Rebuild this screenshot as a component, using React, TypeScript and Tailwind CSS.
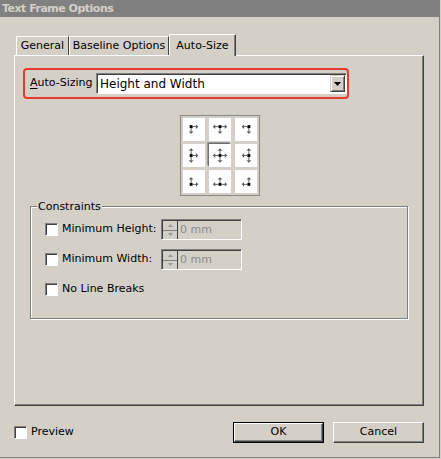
import type { ReactNode } from 'react';

const ui = "font-['DejaVu_Sans',sans-serif]";

/* 锚点图标：黑色方块 + 灰色箭头 */
type Dir = 'u' | 'd' | 'l' | 'r';
const ANGLE: Record<Dir, number> = { r: 0, d: 90, l: 180, u: 270 };

function AnchorGlyph({ dirs }: { dirs: Dir[] }) {
  const dx = (dirs.includes('r') ? 1 : 0) - (dirs.includes('l') ? 1 : 0);
  const dy = (dirs.includes('d') ? 1 : 0) - (dirs.includes('u') ? 1 : 0);
  const cx = 11 - 3 * dx;
  const cy = 11 - 3 * dy;
  const px = cx + 0.5;
  const py = cy + 0.5;
  return (
    <svg width="23" height="23" viewBox="0 0 23 23">
      {dirs.map((d) => (
        <g key={d} transform={`rotate(${ANGLE[d]} ${px} ${py})`} fill="#5c5c5c" stroke="#5c5c5c">
          <line x1={px + 1.5} y1={py} x2={px + 5.5} y2={py} strokeWidth="1" />
          <polygon points={`${px + 7.5},${py} ${px + 5},${py - 2.5} ${px + 5},${py + 2.5}`} stroke="none" />
        </g>
      ))}
      <rect x={cx - 1} y={cy - 1} width="3" height="3" fill="#000" />
    </svg>
  );
}

const CELLS: Dir[][] = [
  ['r', 'd'], ['l', 'r', 'd'], ['l', 'd'],
  ['u', 'd', 'r'], ['u', 'd', 'l', 'r'], ['u', 'd', 'l'],
  ['u', 'r'], ['u', 'l', 'r'], ['u', 'l'],
];

function Checkbox() {
  return (
    <span className="w-[13px] h-[13px] bg-white border border-t-[#808080] border-l-[#808080] border-r-white border-b-white shadow-[inset_1px_1px_0_#404040] shrink-0" />
  );
}

function Button({ children, isDefault }: { children: ReactNode; isDefault?: boolean }) {
  const inner = (
    <div className="w-full h-full flex items-center justify-center border border-t-white border-l-white border-r-[#404040] border-b-[#404040] shadow-[inset_-1px_-1px_0_#808080] text-[11px] text-black">
      {children}
    </div>
  );
  if (isDefault) return <div className="w-[91px] h-[21px] border border-black">{inner}</div>;
  return <div className="w-[91px] h-[21px]">{inner}</div>;
}

function SpinField() {
  return (
    <div className="w-[81px] h-[21px] flex border border-t-[#808080] border-l-[#808080] border-r-white border-b-white shadow-[inset_1px_1px_0_#404040]">
      <div className="w-[15px] ml-[1px] mt-[1px] flex flex-col border-r border-[#404040]">
        <div className="flex-1 flex items-center justify-center border-b border-[#808080]">
          <svg width="5" height="3" viewBox="0 0 5 3"><polygon points="2.5,0 5,3 0,3" fill="#9a9a9a" /></svg>
        </div>
        <div className="flex-1 flex items-center justify-center">
          <svg width="5" height="3" viewBox="0 0 5 3"><polygon points="0,0 5,0 2.5,3" fill="#9a9a9a" /></svg>
        </div>
      </div>
      <span className="pl-[2px] text-[11px] leading-[19px] text-[#8a8a8a]">0 mm</span>
    </div>
  );
}

export default function App() {
  return (
    <div className={`w-[441px] h-[459px] bg-[#d4d0c8] ${ui}`}>
      <div className="w-[440px] h-[458px] flex flex-col border-r border-b border-[#808080]">
        {/* 标题栏 */}
        <div className="h-[17px] bg-[#808080] flex items-center pl-[2px]">
          <span className="text-[11px] font-bold tracking-[-0.5px] text-[#d4d0c8] leading-none">Text Frame Options</span>
        </div>

        {/* 选项卡 */}
        <div className="mt-[17px] ml-[16px] h-[21px] flex items-end text-[11px] text-black">
          <div className="h-[19px] w-[53px] flex items-center justify-center border-t border-l border-white border-r border-r-[#404040]">General</div>
          <div className="h-[19px] w-[100px] flex items-center justify-center border-t border-l border-white border-r border-r-[#404040]">Baseline Options</div>
          <div className="relative z-10 h-[22px] -mb-px w-[67px] flex items-start pt-[3px] justify-center bg-[#d4d0c8] border-t border-l border-white border-r border-r-[#404040] shadow-[inset_-1px_0_0_#808080]">Auto-Size</div>
        </div>

        {/* 面板 */}
        <div className="ml-[14px] w-[410px] h-[351px] flex flex-col border border-t-white border-l-white border-r-[#404040] border-b-[#404040] shadow-[inset_-1px_-1px_0_#808080] text-[11px] text-black">
          <div className="mt-[12px] ml-[8px] w-[326px] h-[31px] flex items-center border-2 border-[#e53c2f] rounded-[4px]">
            <span className="ml-[5px] w-[66px]"><span className="underline underline-offset-2">A</span>uto-Sizing</span>
            <div className="w-[251px] h-[21px] flex items-center bg-white border border-t-[#808080] border-l-[#808080] border-r-white border-b-white shadow-[inset_1px_1px_0_#404040]">
              <span className="flex-1 pl-[3px] text-[12px]">Height and Width</span>
              <div className="w-[15px] h-[17px] mr-[1px] flex items-center justify-center bg-[#d4d0c8] border border-t-[#d4d0c8] border-l-[#d4d0c8] border-r-[#404040] border-b-[#404040] shadow-[inset_1px_1px_0_white,inset_-1px_-1px_0_#808080]">
                <svg width="7" height="4" viewBox="0 0 7 4"><polygon points="0,0 7,0 3.5,4" fill="#000" /></svg>
              </div>
            </div>
          </div>

          {/* 锚点网格 */}
          <div className="mt-[16px] self-center ml-[2px] p-[2px] border border-[#8a8a8a] grid grid-cols-[22px_22px_22px] gap-x-[4px] gap-y-[3px]">
            {CELLS.map((dirs, i) => (
              <div
                key={i}
                className={
                  i === 4
                    ? 'w-[22px] h-[23px] bg-white shadow-[-1px_-1px_0_#707070,-2px_-2px_0_#9a9a9a] flex items-center justify-center overflow-hidden'
                    : 'w-[22px] h-[23px] bg-white flex items-center justify-center overflow-hidden'
                }
              >
                <AnchorGlyph dirs={dirs} />
              </div>
            ))}
          </div>

          {/* 约束 */}
          <div className="relative mt-[10px] ml-[15px] w-[378px] h-[113px] border border-[#808080] shadow-[inset_1px_1px_0_white,1px_1px_0_white] pt-[12px] pl-[14px] flex flex-col gap-[9px]">
            <span className="absolute -top-[8px] left-[6px] px-[1px] bg-[#d4d0c8]">Constraints</span>
            {['Minimum Height:', 'Minimum Width:'].map((label) => (
              <div key={label} className="h-[21px] flex items-center">
                <Checkbox />
                <span className="ml-[4px] w-[99px]">{label}</span>
                <SpinField />
              </div>
            ))}
            <div className="h-[21px] flex items-center">
              <Checkbox />
              <span className="ml-[4px]">No Line Breaks</span>
            </div>
          </div>
        </div>

        {/* 底部 */}
        <div className="mt-[16px] ml-[14px] w-[410px] h-[21px] flex items-center text-[11px] text-black">
          <Checkbox />
          <span className="ml-[4px] flex-1">Preview</span>
          <Button isDefault>OK</Button>
          <div className="w-[9px]" />
          <Button>Cancel</Button>
        </div>
      </div>
    </div>
  );
}
